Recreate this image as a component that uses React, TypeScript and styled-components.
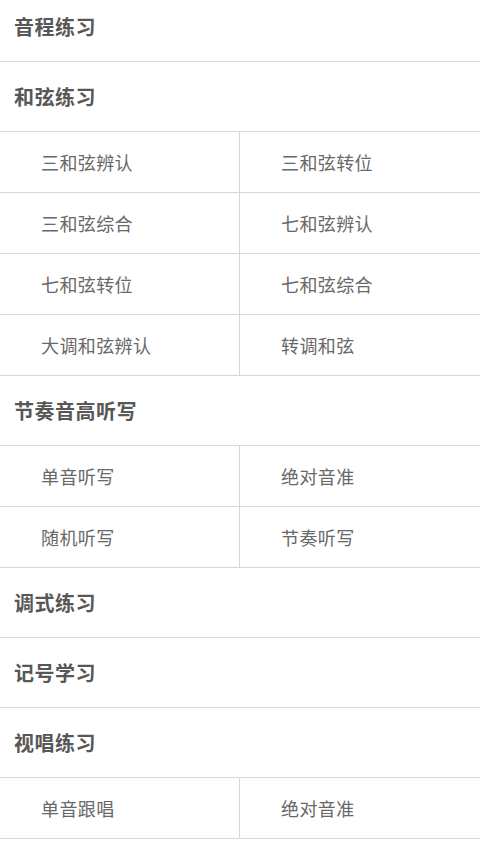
import React from 'react'
import styled, { createGlobalStyle } from 'styled-components'

const GlobalStyle = createGlobalStyle`
  html, body {
    margin: 0;
    padding: 0;
    background: #fff;
  }
  body {
    font-family: "Noto Sans CJK SC", "Noto Sans", sans-serif;
    overflow: hidden;
  }
`;

const Page = styled.div`
  width: 480px;
  height: 853px;
  overflow: hidden;
  background: #fff;
`;

// scrolled list, first header partly hidden
const List = styled.div`
  margin-top: -8px;
  display: flex;
  flex-direction: column;
`;

const SectionHeader = styled.div`
  height: 70px;
  box-sizing: border-box;
  display: flex;
  align-items: center;
  padding-left: 14px;
  border-bottom: 1px solid #d6d6d6;
  color: #575757;
  font-size: 20px;
  font-weight: 700;
  letter-spacing: 0.5px;
`;

const Grid = styled.div`
  display: grid;
  grid-template-columns: 240px 240px;
`;

const Cell = styled.div<{ $left: boolean }>`
  height: 61px;
  display: flex;
  align-items: center;
  box-sizing: border-box;
  padding-left: ${p => (p.$left ? '41px' : '41px')};
  border-bottom: 1px solid #d6d6d6;
  border-right: ${p => (p.$left ? '1px solid #d6d6d6' : 'none')};
  color: #686868;
  font-size: 18px;
  font-weight: 400;
  letter-spacing: 0.4px;
`;

type Section = { title: string; items: string[] }

const sections: Section[] = [
  { title: '音程练习', items: [] },
  {
    title: '和弦练习',
    items: ['三和弦辨认', '三和弦转位', '三和弦综合', '七和弦辨认', '七和弦转位', '七和弦综合', '大调和弦辨认', '转调和弦'],
  },
  { title: '节奏音高听写', items: ['单音听写', '绝对音准', '随机听写', '节奏听写'] },
  { title: '调式练习', items: [] },
  { title: '记号学习', items: [] },
  { title: '视唱练习', items: ['单音跟唱', '绝对音准'] },
]

function App() {
  return (
    <Page>
      <GlobalStyle />
      <List>
        {sections.map(s => (
          <React.Fragment key={s.title}>
            <SectionHeader>{s.title}</SectionHeader>
            {s.items.length > 0 && (
              <Grid>
                {s.items.map((item, i) => (
                  <Cell key={item + i} $left={i % 2 === 0}>{item}</Cell>
                ))}
              </Grid>
            )}
          </React.Fragment>
        ))}
      </List>
    </Page>
  )
}

export default App
